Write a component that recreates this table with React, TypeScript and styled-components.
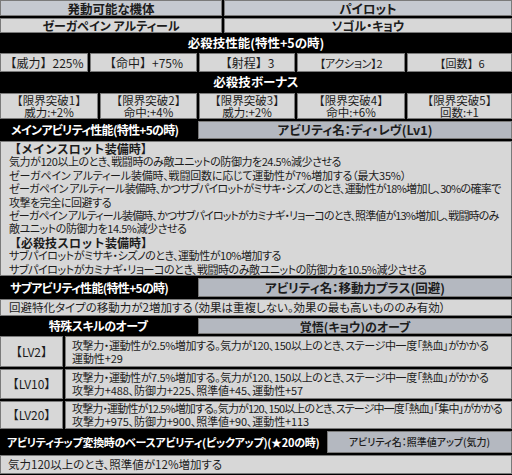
import React from "react";
import styled, { createGlobalStyle } from "styled-components";

const GlobalStyle = createGlobalStyle`
  html, body {
    margin: 0;
    padding: 0;
    background: #000;
  }
  body {
    font-family: "Noto Sans CJK JP", "Noto Sans", sans-serif;
    font-feature-settings: "palt";
    color: #1c1c1c;
  }
`;

const Sheet = styled.div`
  width: 512px;
  height: 475px;
  background: #000;
  display: flex;
  flex-direction: column;
  gap: 2px;
  overflow: hidden;
`;

const Row = styled.div<{ $cols?: string; $h: number }>`
  display: grid;
  grid-template-columns: ${(p) => p.$cols || "1fr"};
  column-gap: 2px;
  height: ${(p) => p.$h}px;
  flex-shrink: 0;
`;

type Tone = "plain" | "head" | "name";
const tones: Record<Tone, string> = {
  plain: "#d7d7d7",
  head: "#c5c9d0",
  name: "#b4b8c0",
};

type TextProps = {
  $size?: number;
  $ls?: number;
  $lh?: number;
  $bold?: boolean;
  $weight?: number;
  $full?: boolean;
};

const Cell = styled.div<TextProps & { $tone?: Tone; $left?: boolean; $pad?: number }>`
  background: ${(p) => tones[p.$tone || "plain"]};
  box-shadow: inset 0 0 0 1px #7a7a7a;
  display: flex;
  flex-direction: column;
  align-items: ${(p) => (p.$left ? "flex-start" : "center")};
  justify-content: center;
  text-align: ${(p) => (p.$left ? "left" : "center")};
  padding: 0 ${(p) => (p.$left ? p.$pad ?? 8 : 0)}px;
  font-size: ${(p) => p.$size || 12}px;
  letter-spacing: ${(p) => p.$ls || 0}px;
  line-height: ${(p) => p.$lh || 14}px;
  font-weight: ${(p) => p.$weight || (p.$bold ? 700 : 400)};
  font-feature-settings: ${(p) => (p.$full ? "normal" : '"palt"')};
  white-space: nowrap;
  overflow: hidden;
`;

const BlackBar = styled.div<TextProps & { $left?: boolean; $pad?: number }>`
  background: #000;
  color: #fff;
  font-weight: 700;
  font-size: ${(p) => p.$size || 12.5}px;
  letter-spacing: ${(p) => p.$ls || 0}px;
  line-height: 1;
  display: flex;
  align-items: center;
  justify-content: ${(p) => (p.$left ? "flex-start" : "center")};
  padding-left: ${(p) => (p.$left ? p.$pad ?? 10 : 0)}px;
  white-space: nowrap;
`;

const TextBlock = styled.div`
  background: #d7d7d7;
  box-shadow: inset 0 0 0 1px #7a7a7a;
  padding: 1px 9px 0;
  font-size: 11px;
  line-height: 13.4px;
  white-space: nowrap;
  overflow: hidden;
`;

const Line = styled.div<{ $bold?: boolean; $ls?: number }>`
  font-weight: ${(p) => (p.$bold ? 700 : 400)};
  font-size: ${(p) => (p.$bold ? "12px" : "inherit")};
  letter-spacing: ${(p) => (p.$bold ? 0 : p.$ls ?? -0.45)}px;
  font-feature-settings: ${(p) => (p.$bold ? "normal" : '"palt"')};
`;

const OrbLine = styled.div<{ $ls: number }>`
  letter-spacing: ${(p) => p.$ls}px;
`;

const specs = [
  { label: "【威力】225%", size: 12, full: true, ls: 0 },
  { label: "【命中】+75%", size: 12, full: true, ls: 0 },
  { label: "【射程】3", size: 12, full: true, ls: 0 },
  { label: "【アクション】2", size: 11, full: false, ls: -0.3 },
  { label: "【回数】6", size: 11, full: true, ls: 0 },
];

const bonuses = [
  ["【限界突破1】", "威力:+2%"],
  ["【限界突破2】", "命中:+4%"],
  ["【限界突破3】", "威力:+2%"],
  ["【限界突破4】", "命中:+6%"],
  ["【限界突破5】", "回数:+1"],
];

const mainLines: { text: string; bold?: boolean; ls?: number }[] = [
  { text: "【メインスロット装備時】", bold: true },
  { text: "気力が120以上のとき、戦闘時のみ敵ユニットの防御力を24.5%減少させる" },
  { text: "ゼーガペイン アルティール装備時、戦闘回数に応じて運動性が7%増加する（最大35%）", ls: -0.2 },
  {
    text: "ゼーガペイン アルティール装備時、かつサブパイロットがミサキ・シズノのとき、運動性が18%増加し、30%の確率で",
    ls: -0.68,
  },
  { text: "攻撃を完全に回避する" },
  {
    text: "ゼーガペイン アルティール装備時、かつサブパイロットがカミナギ・リョーコのとき、照準値が13%増加し、戦闘時のみ",
    ls: -0.88,
  },
  { text: "敵ユニットの防御力を14.5%減少させる" },
  { text: "【必殺技スロット装備時】", bold: true },
  { text: "サブパイロットがミサキ・シズノのとき、運動性が10%増加する" },
  { text: "サブパイロットがカミナギ・リョーコのとき、戦闘時のみ敵ユニットの防御力を10.5%減少させる" },
];

const orbs = [
  {
    lv: "【LV2】",
    h: 31,
    lines: [
      { t: "攻撃力・運動性が2.5%増加する。気力が120、150以上のとき、ステージ中一度「熱血」がかかる", ls: -0.4 },
      { t: "運動性+29", ls: -0.1 },
    ],
  },
  {
    lv: "【LV10】",
    h: 30,
    lines: [
      { t: "攻撃力・運動性が7.5%増加する。気力が120、150以上のとき、ステージ中一度「熱血」がかかる", ls: -0.4 },
      { t: "攻撃力+488、防御力+225、照準値+45、運動性+57", ls: -0.1 },
    ],
  },
  {
    lv: "【LV20】",
    h: 28,
    lines: [
      {
        t: "攻撃力・運動性が12.5%増加する。気力が120、150以上のとき、ステージ中一度「熱血」「集中」がかかる",
        ls: -0.85,
      },
      { t: "攻撃力+975、防御力+900、照準値+90、運動性+113", ls: -0.1 },
    ],
  },
];

export default function App() {
  return (
    <>
      <GlobalStyle />
      <Sheet>
        <Row $cols="222px 1fr" $h={16}>
          <Cell $tone="head" $bold $size={12.5} $lh={15}>
            発動可能な機体
          </Cell>
          <Cell $tone="head" $bold $size={12.5} $lh={15}>
            パイロット
          </Cell>
        </Row>
        <Row $cols="222px 1fr" $h={15}>
          <Cell $bold $lh={14}>ゼーガペイン アルティール</Cell>
          <Cell $bold $lh={14}>ソゴル・キョウ</Cell>
        </Row>
        <Row $h={16}>
          <BlackBar>必殺技性能(特性+5の時)</BlackBar>
        </Row>
        <Row $cols="88px 107px 96px 108px 1fr" $h={19}>
          {specs.map((s) => (
            <Cell key={s.label} $size={s.size} $full={s.full} $ls={s.ls}>
              {s.label}
            </Cell>
          ))}
        </Row>
        <Row $h={17}>
          <BlackBar>必殺技ボーナス</BlackBar>
        </Row>
        <Row $cols="98px 97px 96px 108px 1fr" $h={26}>
          {bonuses.map(([a, b]) => (
            <Cell key={a} $size={11.5} $lh={12.5} $full>
              <div>{a}</div>
              <div>{b}</div>
            </Cell>
          ))}
        </Row>
        <Row $cols="196px 1fr" $h={18}>
          <BlackBar $left $size={12} $ls={-0.7} $pad={11}>
            メインアビリティ性能(特性+5の時)
          </BlackBar>
          <Cell $tone="name" $bold $size={12.5} $lh={16}>
            アビリティ名：ディ・レヴ(Lv1)
          </Cell>
        </Row>
        <Row $h={135}>
          <TextBlock>
            {mainLines.map((l, i) => (
              <Line key={i} $bold={l.bold} $ls={l.ls}>
                {l.text}
              </Line>
            ))}
          </TextBlock>
        </Row>
        <Row $cols="196px 1fr" $h={19}>
          <BlackBar $left $size={12} $ls={-0.7} $pad={10}>
            サブアビリティ性能(特性+5の時)
          </BlackBar>
          <Cell $tone="name" $bold $size={12.5} $lh={16}>
            アビリティ名：移動力プラス(回避)
          </Cell>
        </Row>
        <Row $h={17}>
          <Cell $left $pad={9} $size={11.5} $lh={15}>
            回避特化タイプの移動力が2増加する（効果は重複しない。効果の最も高いもののみ有効）
          </Cell>
        </Row>
        <Row $cols="196px 1fr" $h={16}>
          <BlackBar $size={12} $ls={-0.5}>
            特殊スキルのオーブ
          </BlackBar>
          <Cell $tone="name" $bold $size={12} $lh={15}>
            覚悟(キョウ)のオーブ
          </Cell>
        </Row>
        {orbs.map((o) => (
          <Row key={o.lv} $cols="63px 1fr" $h={o.h}>
            <Cell $size={12} $full>
              {o.lv}
            </Cell>
            <Cell $left $pad={7} $size={11} $lh={13}>
              {o.lines.map((l) => (
                <OrbLine key={l.t} $ls={l.ls}>
                  {l.t}
                </OrbLine>
              ))}
            </Cell>
          </Row>
        ))}
        <Row $cols="325px 1fr" $h={22}>
          <BlackBar $left $size={11} $ls={-0.3} $pad={7}>
            アビリティチップ変換時のベースアビリティ(ピックアップ)(★20の時)
          </BlackBar>
          <Cell $tone="name" $size={10} $weight={500} $lh={14}>
            アビリティ名：照準値アップ(気力)
          </Cell>
        </Row>
        <Row $h={19}>
          <Cell $left $pad={8} $size={11.5} $lh={15}>
            気力120以上のとき、照準値が12%増加する
          </Cell>
        </Row>
      </Sheet>
    </>
  );
}
